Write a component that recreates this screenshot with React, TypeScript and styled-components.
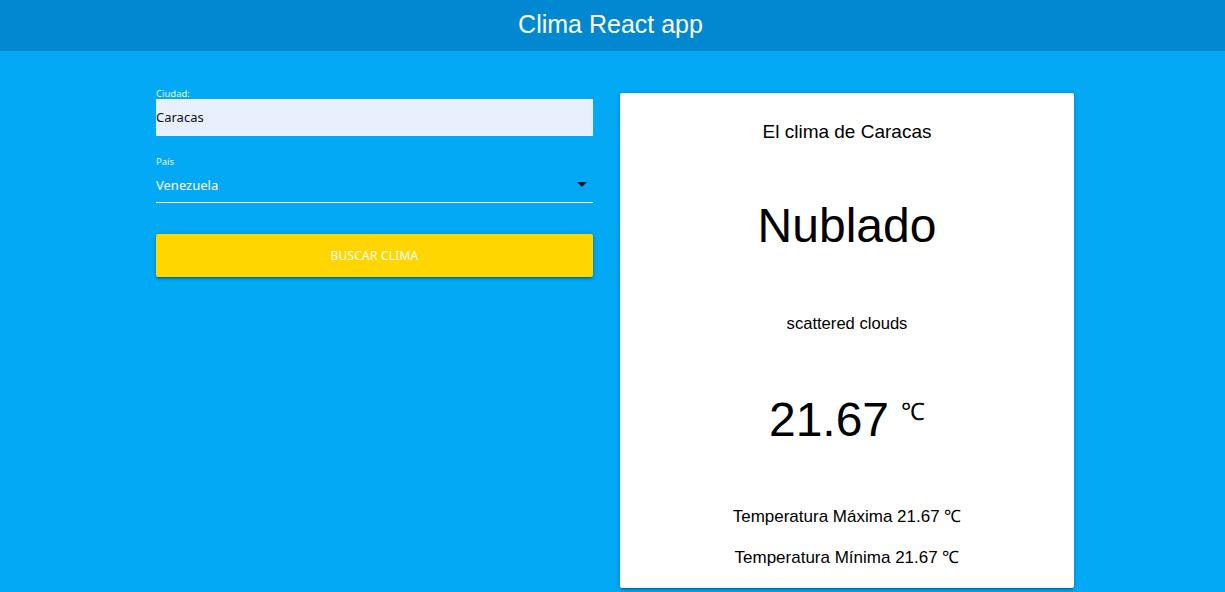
import React from "react";
import styled, { createGlobalStyle } from "styled-components";

const Global = createGlobalStyle`
  html, body { margin: 0; padding: 0; }
  body {
    background: #03a9f4;
    font-family: "Liberation Sans", Arial, sans-serif;
    min-height: 592px;
  }
`;

const Header = styled.header`
  height: 51px;
  background: #0288d1;
  display: flex;
  align-items: center;
  justify-content: center;
  padding-right: 4px;
`;

const Title = styled.h1`
  margin: 0;
  color: #fff;
  font-family: "Liberation Sans", Arial, sans-serif;
  font-weight: 400;
  font-size: 25px;
  line-height: 1;
  transform: translateY(-1px);
`;

const Main = styled.main`
  display: grid;
  grid-template-columns: 437px 454px;
  column-gap: 27px;
  margin-left: 156px;
  padding-top: 42px;
  align-items: start;
`;

const Form = styled.form`
  display: flex;
  flex-direction: column;
  font-family: "Noto Sans", "Open Sans", sans-serif;
`;

const Field = styled.div<{ $gap?: number }>`
  display: flex;
  flex-direction: column;
  margin-bottom: ${(p) => p.$gap ?? 0}px;
`;

const Label = styled.label<{ $top?: number }>`
  color: #e8f4fd;
  font-size: 9.5px;
  line-height: 10px;
  height: 10px;
  margin-top: ${(p) => p.$top ?? 0}px;
`;

const Input = styled.div`
  height: 36px;
  background: #e8f0fe;
  border-bottom: 1px solid #fff;
  color: #111;
  font-size: 13px;
  display: flex;
  align-items: center;
`;

const SelectBox = styled.div`
  height: 35px;
  border-bottom: 1px solid #fff;
  color: #fff;
  font-size: 13px;
  display: flex;
  align-items: center;
  justify-content: space-between;
`;

const Caret = styled.span`
  width: 0;
  height: 0;
  border-left: 5px solid transparent;
  border-right: 5px solid transparent;
  border-top: 5px solid #1a1a1a;
  margin-right: 6px;
`;

const Button = styled.button`
  height: 43px;
  border: none;
  border-radius: 2px;
  background: #ffd600;
  color: #fff;
  font-family: "Noto Sans", "Open Sans", sans-serif;
  font-size: 12px;
  letter-spacing: 0.2px;
  text-transform: uppercase;
  box-shadow: 0 2px 2px 0 rgba(0, 0, 0, 0.14), 0 3px 1px -2px rgba(0, 0, 0, 0.12),
    0 1px 5px 0 rgba(0, 0, 0, 0.2);
  cursor: pointer;
`;

const Card = styled.section`
  background: #fff;
  border-radius: 2px;
  box-shadow: 0 2px 2px 0 rgba(0, 0, 0, 0.14), 0 3px 1px -2px rgba(0, 0, 0, 0.12),
    0 1px 5px 0 rgba(0, 0, 0, 0.2);
  padding: 24px 0 18px;
  display: flex;
  flex-direction: column;
  align-items: center;
  color: #000;
  text-align: center;
`;

const Line = styled.p<{ $size: number; $lh: number; $mt: number }>`
  margin: ${(p) => p.$mt}px 0 0;
  font-size: ${(p) => p.$size}px;
  line-height: ${(p) => p.$lh}px;
  font-weight: 400;
`;

const Deg = styled.span`
  font-size: 24px;
  vertical-align: top;
  position: relative;
  top: -8px;
  margin-left: 12px;
`;

export default function App() {
  return (
    <>
      <Global />
      <Header>
        <Title>Clima React app</Title>
      </Header>
      <Main>
        <Form onSubmit={(e) => e.preventDefault()}>
          <Field $gap={21}>
            <Label $top={-4}>Ciudad:</Label>
            <Input>Caracas</Input>
          </Field>
          <Field $gap={31}>
            <Label>País</Label>
            <SelectBox>
              <span>Venezuela</span>
              <Caret />
            </SelectBox>
          </Field>
          <Button type="submit">Buscar clima</Button>
        </Form>
        <Card>
          <Line $size={19} $lh={30} $mt={0}>El clima de Caracas</Line>
          <Line $size={48} $lh={56} $mt={51}>Nublado</Line>
          <Line $size={16.6} $lh={24} $mt={58}>scattered clouds</Line>
          <Line $size={48} $lh={56} $mt={56}>
            21.67<Deg>℃</Deg>
          </Line>
          <Line $size={17} $lh={24} $mt={57}>Temperatura Máxima 21.67 ℃</Line>
          <Line $size={17} $lh={24} $mt={17}>Temperatura Mínima 21.67 ℃</Line>
        </Card>
      </Main>
    </>
  );
}
